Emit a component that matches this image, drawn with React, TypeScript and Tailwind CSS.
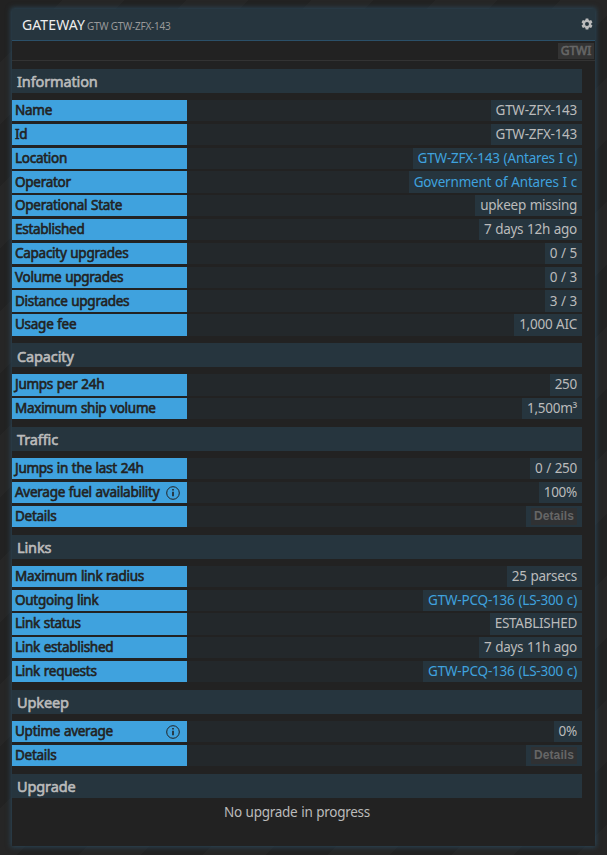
import { Fragment } from "react";
import type { ReactNode } from "react";

interface Row {
  label: string;
  value: string;
  kind?: "link" | "button";
  info?: boolean;
}

interface Section {
  title: string;
  rows: Row[];
}

const sections: Section[] = [
  {
    title: "Information",
    rows: [
      { label: "Name", value: "GTW-ZFX-143" },
      { label: "Id", value: "GTW-ZFX-143" },
      { label: "Location", value: "GTW-ZFX-143 (Antares I c)", kind: "link" },
      { label: "Operator", value: "Government of Antares I c", kind: "link" },
      { label: "Operational State", value: "upkeep missing" },
      { label: "Established", value: "7 days 12h ago" },
      { label: "Capacity upgrades", value: "0 / 5" },
      { label: "Volume upgrades", value: "0 / 3" },
      { label: "Distance upgrades", value: "3 / 3" },
      { label: "Usage fee", value: "1,000 AIC" },
    ],
  },
  {
    title: "Capacity",
    rows: [
      { label: "Jumps per 24h", value: "250" },
      { label: "Maximum ship volume", value: "1,500m³" },
    ],
  },
  {
    title: "Traffic",
    rows: [
      { label: "Jumps in the last 24h", value: "0 / 250" },
      { label: "Average fuel availability", value: "100%", info: true },
      { label: "Details", value: "Details", kind: "button" },
    ],
  },
  {
    title: "Links",
    rows: [
      { label: "Maximum link radius", value: "25 parsecs" },
      { label: "Outgoing link", value: "GTW-PCQ-136 (LS-300 c)", kind: "link" },
      { label: "Link status", value: "ESTABLISHED" },
      { label: "Link established", value: "7 days 11h ago" },
      { label: "Link requests", value: "GTW-PCQ-136 (LS-300 c)", kind: "link" },
    ],
  },
  {
    title: "Upkeep",
    rows: [
      { label: "Uptime average", value: "0%", info: true },
      { label: "Details", value: "Details", kind: "button" },
    ],
  },
];

function GearIcon() {
  return (
    <svg viewBox="0 0 24 24" className="mb-[2px] h-[14px] w-[14px] fill-[#bbbbbb]">
      <path d="M19.14 12.94c.04-.3.06-.61.06-.94s-.02-.64-.07-.94l2.03-1.58a.49.49 0 0 0 .12-.61l-1.92-3.32a.49.49 0 0 0-.59-.22l-2.39.96a7 7 0 0 0-1.62-.94l-.36-2.54A.48.48 0 0 0 13.92 2.4h-3.84a.48.48 0 0 0-.48.41l-.36 2.54c-.59.24-1.13.57-1.62.94l-2.39-.96a.48.48 0 0 0-.59.22L2.74 8.87a.47.47 0 0 0 .12.61l2.03 1.58a6 6 0 0 0 0 1.88l-2.03 1.58a.49.49 0 0 0-.12.61l1.92 3.32c.12.22.37.29.59.22l2.39-.96c.5.38 1.03.7 1.62.94l.36 2.54c.05.24.24.41.48.41h3.84c.24 0 .44-.17.47-.41l.36-2.54a7 7 0 0 0 1.62-.94l2.39.96c.22.08.47 0 .59-.22l1.92-3.32a.47.47 0 0 0-.12-.61zM12 15.4a3.4 3.4 0 1 1 0-6.8 3.4 3.4 0 0 1 0 6.8z" />
    </svg>
  );
}

function InfoIcon() {
  return (
    <svg viewBox="0 0 14 14" className="h-[14px] w-[14px] shrink-0 text-[#222222]">
      <circle cx="7" cy="7" r="6.3" fill="none" stroke="currentColor" />
      <path d="M6.2 3h1.6v1.6H6.2zM6.2 5.7h1.6v4.6H6.2z" fill="currentColor" />
    </svg>
  );
}

function SectionTitle({ children }: { children: ReactNode }) {
  return (
    <h2 className="flex h-6 items-center bg-[#26353e] px-[5px] pt-[1.6px] text-[14.5px] leading-none tracking-[-0.12px] text-[#bbbbbb] [-webkit-text-stroke:0.6px_#bbbbbb]">
      {children}
    </h2>
  );
}

function DataRow({ row }: { row: Row }) {
  return (
    <div className="mb-[2.5625px] flex h-[21.25px] bg-[#23282b] text-[13.5px] leading-[20px] tracking-[-0.27px] [word-spacing:0.5px]">
      <div className="flex w-[175px] items-center justify-between whitespace-nowrap bg-[#3fa2de] pr-[7px] pl-[3px] text-[#222222]">
        <span className="pb-[1.1px] [-webkit-text-stroke:0.6px_#222222]">{row.label}</span>
        {row.info && <InfoIcon />}
      </div>
      <div className="ml-auto flex items-center bg-[#26353e] px-[5px] text-[#bbbbbb]">
        {row.kind === "link" && (
          <a className="pb-[1.1px] tracking-[-0.2px] text-[#3fa2de]">{row.value}</a>
        )}
        {row.kind === "button" && (
          <button className="h-[17px] w-[46px] bg-[#2f3133] text-center font-['Liberation_Sans',sans-serif] text-[12px] leading-[17px] font-bold tracking-[0.1px] text-[#666666]">
            {row.value}
          </button>
        )}
        {!row.kind && <span className="pb-[1.1px]">{row.value}</span>}
      </div>
    </div>
  );
}

export default function App() {
  return (
    <div className="h-[855px] w-[607px] bg-[#222222] bg-[repeating-linear-gradient(135deg,#222222_0px,#222222_44px,#262626_44px,#262626_88px)] px-3 pt-[9px] font-['Noto_Sans',sans-serif]">
      <div className="h-[837px] w-[583px] bg-[#222222] shadow-[0_0_5px_1px_#2b485a]">
        <header className="flex h-8 items-center justify-between border-b border-[#2b5069] bg-[#26353e] pr-[1px] pl-[10px]">
          <div className="flex items-baseline">
            <span className="text-[14px] tracking-[0.1px] text-[#eeeeee]">GATEWAY</span>
            <span className="ml-[2px] text-[10px] tracking-[-0.25px] text-[#999999]">GTW GTW-ZFX-143</span>
          </div>
          <GearIcon />
        </header>

        <div className="flex h-5 items-center justify-end border-b border-[#333333] pr-[1px]">
          <span className="h-4 w-9 bg-[#333333] text-center text-[12px] leading-[16px] text-[#666666] [-webkit-text-stroke:0.6px_#666666]">
            GTWI
          </span>
        </div>

        <main className="w-[570px] pt-[7.8px]">
          {sections.map((section) => (
            <Fragment key={section.title}>
              <SectionTitle>{section.title}</SectionTitle>
              <div className="pt-[7.2px] pb-[5px]">
                {section.rows.map((row) => (
                  <DataRow key={row.label} row={row} />
                ))}
              </div>
            </Fragment>
          ))}
          <SectionTitle>Upgrade</SectionTitle>
          <p className="pt-[4px] text-center text-[13.5px] leading-[20px] tracking-[-0.27px] text-[#bbbbbb] [word-spacing:0.5px]">
            No upgrade in progress
          </p>
        </main>
      </div>
    </div>
  );
}
